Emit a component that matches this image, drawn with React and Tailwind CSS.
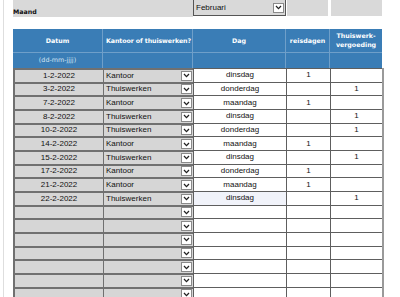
import React from 'react'

const rows = [
  { datum: '1-2-2022', soort: 'Kantoor', dag: 'dinsdag', reis: '1', thuis: '' },
  { datum: '3-2-2022', soort: 'Thuiswerken', dag: 'donderdag', reis: '', thuis: '1' },
  { datum: '7-2-2022', soort: 'Kantoor', dag: 'maandag', reis: '1', thuis: '' },
  { datum: '8-2-2022', soort: 'Thuiswerken', dag: 'dinsdag', reis: '', thuis: '1' },
  { datum: '10-2-2022', soort: 'Thuiswerken', dag: 'donderdag', reis: '', thuis: '1' },
  { datum: '14-2-2022', soort: 'Kantoor', dag: 'maandag', reis: '1', thuis: '' },
  { datum: '15-2-2022', soort: 'Thuiswerken', dag: 'dinsdag', reis: '', thuis: '1' },
  { datum: '17-2-2022', soort: 'Kantoor', dag: 'donderdag', reis: '1', thuis: '' },
  { datum: '21-2-2022', soort: 'Kantoor', dag: 'maandag', reis: '1', thuis: '' },
  { datum: '22-2-2022', soort: 'Thuiswerken', dag: 'dinsdag', reis: '', thuis: '1', hover: true },
  ...Array.from({ length: 7 }, () => ({ datum: '', soort: '', dag: '', reis: '', thuis: '' }))
]

function Chevron() {
  return (
    <svg width="7" height="5" viewBox="0 0 7 5">
      <path d="M1 1 L3.5 3.6 L6 1" fill="none" stroke="#222" strokeWidth="1.3" />
    </svg>
  )
}

function ArrowBox({ className = '' }) {
  return (
    <div className={`w-[11px] h-[10px] bg-white border border-[#8a8a8a] flex items-center justify-center ${className}`}>
      <Chevron />
    </div>
  )
}

export default function App() {
  const head = "font-['DejaVu_Sans',sans-serif] font-bold text-[6.3px] text-white whitespace-nowrap"
  const cell = "font-['Liberation_Sans',Arial,sans-serif] text-[8px] text-[#111]"

  return (
    <div className="w-[400px] h-[297px] overflow-hidden bg-white pl-[3px]">
      <div className="h-full border-l border-[#dedede] pl-[9px]">
        {/* maand keuze */}
        <div className="flex h-[17px]">
          <div className="w-[180px] h-[17px] bg-[#d9d9d9] flex items-end pb-[2px]">
            <span className="font-['DejaVu_Sans',sans-serif] font-bold text-[6.3px] text-[#111] leading-none">Maand</span>
          </div>
          <div className="w-[93px] h-[16px] bg-[#d9d9d9] border border-[#555] border-t-0 flex items-center justify-between pl-[2px] pr-[1px]">
            <span className={`${cell} leading-none`}>Februari</span>
            <ArrowBox />
          </div>
          <div className="w-[41px] h-[16px] bg-[#d9d9d9] ml-[1px]" />
          <div className="w-[51px] h-[16px] bg-[#d9d9d9] ml-[3px]" />
        </div>

        {/* kop */}
        <div className="mt-[12px] w-[369px] bg-[#3a7db6]">
          <div className="grid grid-cols-[90px_90px_93px_44px_52px] h-[24px] border-b border-[#6f9fc9]">
            <div className={`${head} flex items-center justify-center border-r border-[#6f9fc9]`}>Datum</div>
            <div className={`${head} flex items-center pl-[3px] tracking-[-0.1px] border-r border-[#6f9fc9]`}>Kantoor of thuiswerken?</div>
            <div className={`${head} flex items-center justify-center border-r border-[#6f9fc9]`}>Dag</div>
            <div className={`${head} flex items-center justify-center border-r border-[#6f9fc9]`}>reisdagen</div>
            <div className={`${head} flex items-center justify-center text-center leading-[1.35]`}>
              Thuiswerk-<br />vergoeding
            </div>
          </div>
          <div className="grid grid-cols-[90px_90px_93px_44px_52px] h-[15px]">
            <div className="font-['DejaVu_Sans',sans-serif] text-[6.4px] text-[#d3e4f3] flex items-center justify-center border-r border-[#6f9fc9]">
              (dd-mm-<span className="underline decoration-dotted">jjjj</span>)
            </div>
            <div className="border-r border-[#6f9fc9]" />
            <div className="border-r border-[#6f9fc9]" />
            <div className="border-r border-[#6f9fc9]" />
            <div />
          </div>
        </div>

        {/* regels */}
        <div className="w-[371px] border-r-2 border-[#9a9a9a]">
          {rows.map((r, i) => (
            <div key={i} className="grid grid-cols-[90px_90px_93px_44px_52px] h-[13.67px]">
              <div className={`${cell} bg-[#d6d6d6] border-t-2 border-l-2 border-[#707070] flex items-center justify-center leading-none`}>
                {r.datum}
              </div>
              <div className="bg-[#d6d6d6] border-t-2 border-l border-[#707070] flex items-center justify-between pl-[2px] pr-[1px]">
                <span className={`${cell} leading-none`}>{r.soort}</span>
                <ArrowBox className="h-[9px]" />
              </div>
              <div className={`${cell} ${r.hover ? 'bg-[#f1f3fa]' : 'bg-white'} border-t border-l border-[#5e5e5e] flex items-center justify-center leading-none`}>
                {r.dag}
              </div>
              <div className={`${cell} bg-white border-t border-l border-[#5e5e5e] flex items-center justify-center leading-none`}>
                {r.reis}
              </div>
              <div className={`${cell} bg-white border-t border-l border-[#5e5e5e] flex items-center justify-center leading-none`}>
                {r.thuis}
              </div>
            </div>
          ))}
        </div>
      </div>
    </div>
  )
}
